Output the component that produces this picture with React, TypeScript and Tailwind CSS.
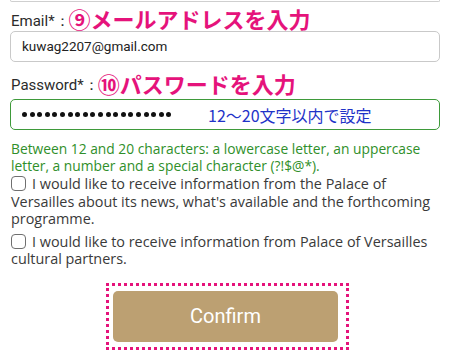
import React from 'react';

const jp = { fontFamily: '"Noto Sans CJK JP", sans-serif' };

const Checkbox: React.FC = () => (
  <span className="inline-block w-[15px] h-[15px] border border-[#6f6f6f] rounded-[4px] align-[-2px] mr-[6px] bg-white"></span>
);

const App: React.FC = () => {
  return (
    <div className="w-[450px] h-[357px] bg-white overflow-hidden text-[#2b2b2b]" style={{ fontFamily: 'Roboto, "Liberation Sans", sans-serif' }}>
      {/* bord du champ précédent */}
      <div className="mx-[10px] h-[2px] border-x border-b border-[#cfcfcf] rounded-b-[4px]"></div>

      <div className="px-[10px]">
        <div className="flex items-end h-[29px] pl-[1px]">
          <span className="text-[15px] leading-[18px] mb-[1px]">Email*：</span>
          <span className="text-[#e5137b] text-[22px] leading-[26px] font-bold -ml-[1px]" style={jp}>⑨メールアドレスを入力</span>
        </div>
        <div className="h-[31px] border border-[#c9c9c9] rounded-[5px] flex items-center px-[11px] text-[13.5px] text-[#222]">
          kuwag2207@gmail.com
        </div>

        <div className="flex items-end h-[34px] pl-[1px]">
          <span className="text-[15px] leading-[18px] mb-[2px]">Password*：</span>
          <span className="text-[#e5137b] text-[22px] leading-[26px] font-bold -ml-[1px]" style={jp}>⑩パスワードを入力</span>
        </div>
        <div className="mt-[3px] h-[31px] border-[1.5px] border-[#3e9a3a] rounded-[5px] flex items-center px-[11px]">
          <div className="flex gap-[2.6px] w-[186px]">
            {Array.from({ length: 20 }).map((_, i) => (
              <span key={i} className="w-[5px] h-[5px] rounded-full bg-[#111]"></span>
            ))}
          </div>
          <span className="text-[#1f33c8] text-[16px]" style={jp}>12〜20文字以内で設定</span>
        </div>

        <p className="mt-[10px] text-[13.8px] leading-[17px] text-[#2f8f2a] pl-[1px]" style={{ fontFamily: '"Open Sans", sans-serif' }}>
          Between 12 and 20 characters: a lowercase letter, an uppercase letter, a number and a special character (?!$@*).
        </p>

        <div className="text-[14.4px] leading-[17.5px] text-[#3a3a3a] pl-[1px]" style={{ fontFamily: '"Open Sans", sans-serif' }}>
          <p className="mt-[1px]">
            <Checkbox />I would like to receive information from the Palace of Versailles about its news, what's available and the forthcoming programme.
          </p>
          <p className="mt-[5px]">
            <Checkbox />I would like to receive information from Palace of Versailles cultural partners.
          </p>
        </div>

        <div className="flex mt-[15px] ml-[96px]">
          <div className="border-[3px] border-dotted border-[#e5137b] pl-[4px] pr-[8px] py-[5px]">
            <button className="w-[225px] h-[51px] bg-[#bca072] rounded-[5px] text-white text-[20px]">Confirm</button>
          </div>
        </div>
      </div>
    </div>
  );
};

export default App;
